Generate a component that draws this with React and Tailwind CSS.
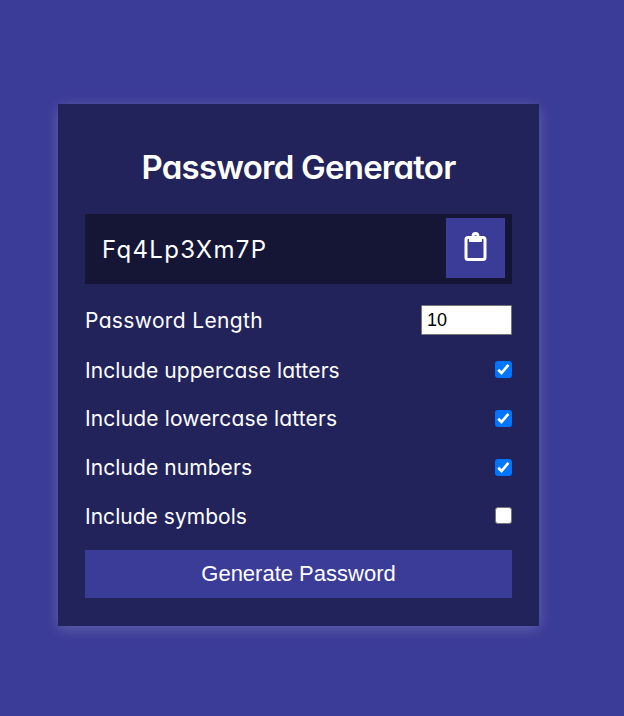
import { useState } from 'react';

const LABEL_FONT = "font-['Inter','Lato',sans-serif] [font-feature-settings:'cv11']";

const OPTIONS = [
  { id: 'upper', label: 'Include uppercase latters', on: true, row: 'mt-[20px]', text: 'pt-[2px] tracking-[0.08px]' },
  { id: 'lower', label: 'Include lowercase latters', on: true, row: 'mt-[19px]', text: 'tracking-[0.14px]' },
  { id: 'numbers', label: 'Include numbers', on: true, row: 'mt-[19px]', text: 'tracking-[0.08px]' },
  { id: 'symbols', label: 'Include symbols', on: false, row: 'mt-[18px]', text: 'pt-[2px] tracking-[0.03px]' },
];

function ClipboardIcon() {
  return (
    <svg width="23" height="30" viewBox="0 0 23 30" fill="none" className="mb-[2px] block">
      <rect x="2" y="5.5" width="19" height="22" rx="2" stroke="#fff" strokeWidth="3" />
      <path
        fill="#fff"
        fillRule="evenodd"
        d="M5 4h2.6a3.9 3.9 0 0 1 7.8 0h2.6v5q0 1-1 1H6q-1 0-1-1ZM11.5 3.2a1.3 1.3 0 1 0 0 2.6a1.3 1.3 0 1 0 0-2.6Z"
      />
    </svg>
  );
}

function Checkbox({ checked, onClick, label }) {
  return (
    <button
      type="button"
      role="checkbox"
      aria-checked={checked}
      aria-label={label}
      onClick={onClick}
      className={
        checked
          ? 'mb-[2px] flex h-[17px] w-[17px] items-center justify-center rounded-[3px] bg-[#0075ff]'
          : 'mb-[2px] h-[17px] w-[17px] rounded-[3px] border border-[#767676] bg-white'
      }
    >
      {checked && (
        <svg width="17" height="17" viewBox="0 0 17 17" fill="none">
          <path d="M3.2 8.7L6.5 12L13.4 3.8" stroke="#fff" strokeWidth="2.7" />
        </svg>
      )}
    </button>
  );
}

export default function App() {
  const [options, setOptions] = useState(OPTIONS);
  const toggle = (id) => setOptions(options.map((o) => (o.id === id ? { ...o, on: !o.on } : o)));

  return (
    <div className={`h-[716px] w-[624px] overflow-hidden bg-[#3b3b98] pl-[58px] pt-[104px] text-white ${LABEL_FONT}`}>
      <div className="h-[522px] w-[481px] bg-[#23235b] px-[27px] pt-[42px] shadow-[0_3px_14px_rgba(255,255,255,0.2)]">
        <h2 className="h-[42px] whitespace-nowrap text-center text-[33px] font-semibold leading-[42px] tracking-[-0.77px]">
          Password Generator
        </h2>
        <div className="mt-[26px] flex h-[70px] items-center justify-between bg-[#151536] pl-[17px] pr-[7px]">
          <span className="pt-px text-[24px] tracking-[1.3px]">Fq4Lp3Xm7P</span>
          <button type="button" aria-label="Copy" className="mb-[2px] flex h-[60px] w-[59px] items-center justify-center bg-[#3b3b98]">
            <ClipboardIcon />
          </button>
        </div>
        <div className="mt-[21px] flex h-[30px] items-center justify-between">
          <label className="whitespace-nowrap pt-[2px] text-[21px] tracking-[0.35px]">Password Length</label>
          <input
            type="text"
            defaultValue="10"
            className="h-[30px] w-[91px] rounded-[1px] border border-[#767676] bg-white px-[5px] font-['Liberation_Sans',sans-serif] text-[18px] text-black outline-none"
          />
        </div>
        <div className="flex flex-col">
          {options.map((o) => (
            <div key={o.id} className={`flex h-[30px] items-center justify-between ${o.row}`}>
              <span className={`whitespace-nowrap text-[21px] ${o.text}`}>{o.label}</span>
              <Checkbox checked={o.on} label={o.label} onClick={() => toggle(o.id)} />
            </div>
          ))}
        </div>
        <button
          type="button"
          className="mt-[19px] h-[48px] w-full bg-[#3b3b98] pb-[2px] font-['Liberation_Sans',sans-serif] text-[22px]"
        >
          Generate Password
        </button>
      </div>
    </div>
  );
}
